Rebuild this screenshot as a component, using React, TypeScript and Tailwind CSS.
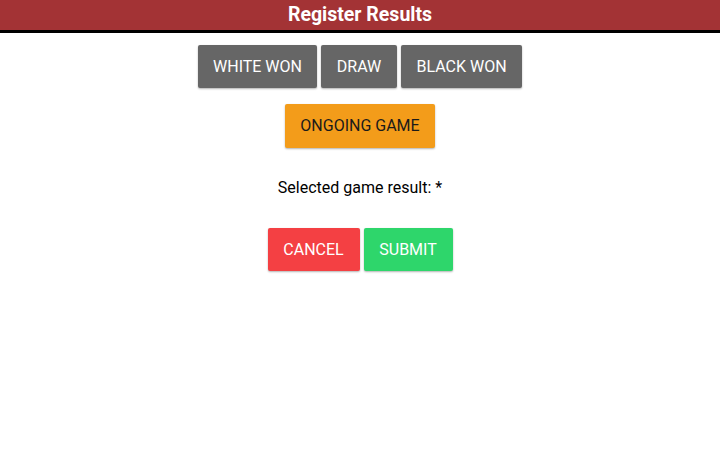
export default function App() {
  const btn =
    'h-[43px] px-0 whitespace-nowrap rounded-[2px] text-[16px] font-normal shadow-[0_1px_2px_rgba(0,0,0,0.3)]'

  return (
    <div className="w-[720px] h-[450px] bg-white font-['Roboto',sans-serif]">
      {/* Title bar */}
      <div className="h-[30px] bg-[#a33335] flex items-center justify-center border-b-[3px] border-black box-content">
        <h1 className="text-white text-[19.5px] font-bold leading-none">Register Results</h1>
      </div>

      {/* Result choices */}
      <div className="flex justify-center gap-1 mt-[12px]">
        <button className={`${btn} w-[119px] bg-[#666666] text-white`}>WHITE WON</button>
        <button className={`${btn} w-[76px] bg-[#666666] text-white`}>DRAW</button>
        <button className={`${btn} w-[121px] bg-[#666666] text-white`}>BLACK WON</button>
      </div>

      <div className="flex justify-center mt-[16px]">
        <button className={`${btn} h-[44px] w-[150px] bg-[#f39c1a] text-[#1a1a1a]`}>ONGOING GAME</button>
      </div>

      <p className="text-center text-[16px] text-black mt-[30px] leading-5">Selected game result: *</p>

      {/* Actions */}
      <div className="flex justify-center gap-1 mt-[30px]">
        <button className={`${btn} w-[92px] bg-[#f44043] text-white`}>CANCEL</button>
        <button className={`${btn} w-[89px] bg-[#2ed66b] text-white`}>SUBMIT</button>
      </div>
    </div>
  )
}
